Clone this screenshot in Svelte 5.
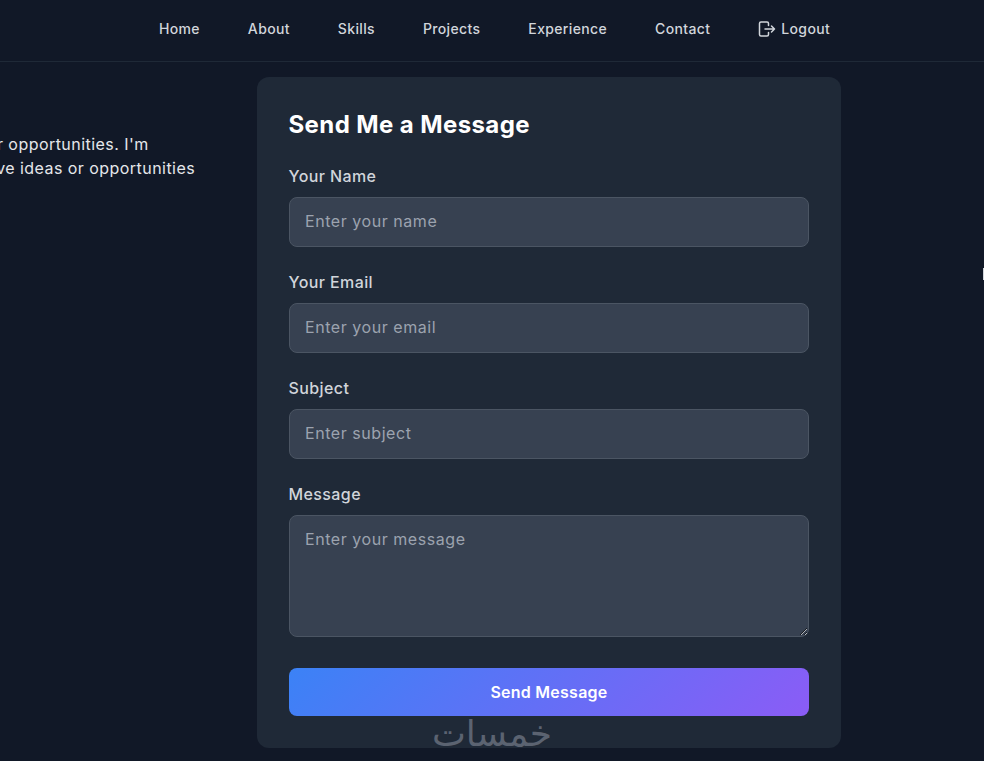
<script>
	const links = ['Home', 'About', 'Skills', 'Projects', 'Experience', 'Contact'];
	const fields = [
		{ label: 'Your Name', type: 'text', placeholder: 'Enter your name' },
		{ label: 'Your Email', type: 'email', placeholder: 'Enter your email' },
		{ label: 'Subject', type: 'text', placeholder: 'Enter subject' }
	];
</script>

<div class="page">
	<nav class="nav">
		{#each links as link}
			<a href="#{link.toLowerCase()}">{link}</a>
		{/each}
		<a href="#logout" class="logout">
			<svg width="18" height="18" viewBox="0 0 18 18" fill="none" stroke="currentColor" stroke-width="1.5" stroke-linecap="round" stroke-linejoin="round">
				<path d="M10.5 5.5V3.5a1.5 1.5 0 0 0-1.5-1.5H3a1.5 1.5 0 0 0-1.5 1.5v11A1.5 1.5 0 0 0 3 16h6a1.5 1.5 0 0 0 1.5-1.5v-2" />
				<path d="M7 9h9.5M13.5 6l3 3-3 3" />
			</svg>
			Logout
		</a>
	</nav>

	<main class="contact">
		<div class="intro">
			<p>
				<span class="line-one">career opportunities. I'm</span>
				<span class="line-two">creative ideas or opportunities</span>
			</p>
		</div>

		<form class="card" onsubmit={(e) => e.preventDefault()}>
			<h2>Send Me a Message</h2>
			{#each fields as field}
				<label class="field">
					<span>{field.label}</span>
					<input type={field.type} placeholder={field.placeholder} />
				</label>
			{/each}
			<label class="field">
				<span>Message</span>
				<textarea placeholder="Enter your message"></textarea>
			</label>
			<button type="submit">Send Message</button>
			<div class="watermark" dir="rtl">خمسات</div>
		</form>
	</main>

	<div class="edge"></div>
</div>

<style>
	:global(body) {
		background: #111827;
		overflow: hidden;
	}

	.page {
		position: relative;
		height: 761px;
		overflow: hidden;
		background: #111827;
		font-family: Inter, "Noto Sans", sans-serif;
		color: #d1d5db;
	}

	.nav {
		display: flex;
		justify-content: center;
		align-items: center;
		gap: 48px;
		height: 57px;
		padding: 0 0 4px 5px;
		border-bottom: 1px solid #1f2937;
		box-sizing: content-box;
	}

	.nav a {
		color: #d1d5db;
		text-decoration: none;
		font-size: 14px;
		font-weight: 500;
		letter-spacing: 0.35px;
	}

	.logout {
		display: flex;
		align-items: center;
		gap: 5px;
	}

	.contact {
		display: flex;
		padding-top: 15px;
	}

	.intro {
		width: 257px;
		flex: none;
		overflow: hidden;
	}

	.intro p {
		margin: 55px 0 0;
		font-size: 16px;
		line-height: 24px;
		color: #e5e7eb;
		letter-spacing: 0.45px;
		white-space: nowrap;
	}

	.intro span {
		display: block;
	}

	.line-one {
		margin-left: -48px;
	}

	.line-two {
		margin-left: -49px;
	}

	.card {
		position: relative;
		width: 584px;
		height: 671px;
		box-sizing: border-box;
		padding: 32px;
		background: #1f2937;
		border-radius: 12px;
	}

	h2 {
		margin: 0 0 24px -0.5px;
		font-size: 24px;
		line-height: 32px;
		font-weight: 700;
		letter-spacing: 0.4px;
		color: #fff;
	}

	.field {
		display: block;
		margin-bottom: 24px;
	}

	.field span {
		display: block;
		margin: -1px 0 9px -0.5px;
		font-size: 16px;
		line-height: 24px;
		font-weight: 500;
		letter-spacing: 0.4px;
		color: #d1d5db;
	}

	input,
	textarea {
		display: block;
		width: 100%;
		box-sizing: border-box;
		padding: 11px 15px 13px;
		background: #374151;
		border: 1px solid #4b5563;
		border-radius: 8px;
		color: #fff;
		font: inherit;
		font-size: 16px;
		line-height: 24px;
		letter-spacing: 0.55px;
		outline: none;
	}

	input {
		height: 50px;
	}

	textarea {
		height: 122px;
		resize: vertical;
	}

	input::placeholder,
	textarea::placeholder {
		color: #9ca3af;
		opacity: 1;
	}

	button {
		display: block;
		width: 100%;
		height: 48px;
		margin-top: 31px;
		padding: 0 0 1px;
		border: 0;
		border-radius: 8px;
		background: linear-gradient(135deg, #3b82f6, #8b5cf6);
		color: #fff;
		font: inherit;
		font-size: 16px;
		font-weight: 600;
		letter-spacing: 0.25px;
	}

	.watermark {
		position: absolute;
		left: 175px;
		top: 637px;
		width: 120px;
		text-align: center;
		font-family: "DejaVu Sans", sans-serif;
		font-size: 36px;
		line-height: 40px;
		color: #6b7280;
		opacity: 0.8;
		white-space: nowrap;
	}

	.edge {
		position: absolute;
		right: 0;
		top: 268px;
		width: 1px;
		height: 12px;
		background: #d1d5db;
	}
</style>
